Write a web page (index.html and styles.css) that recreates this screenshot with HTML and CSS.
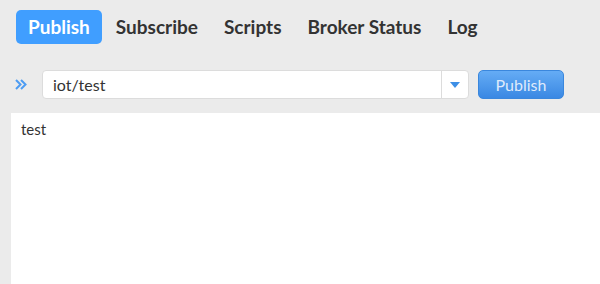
FILE: index.html
```html
<!DOCTYPE html>
<html lang="en">
<head>
<meta charset="UTF-8" />
<title>MQTT Publish</title>
<link rel="stylesheet" href="styles.css">
</head>
<body>
<div class="app">
  <nav class="tabs">
    <a class="tab active">Publish</a>
    <a class="tab">Subscribe</a>
    <a class="tab">Scripts</a>
    <a class="tab">Broker Status</a>
    <a class="tab">Log</a>
  </nav>
  <div class="topic-row">
    <span class="expand">
      <svg width="12" height="11" viewBox="0 0 12 11"><path d="M1 1 L5.5 5.5 L1 10 M6 1 L10.5 5.5 L6 10" fill="none" stroke="#4d9cf3" stroke-width="2"/></svg>
    </span>
    <div class="topic">
      <input type="text" value="iot/test" />
      <span class="caret">
        <svg width="10" height="6" viewBox="0 0 10 6"><path d="M0 0 L10 0 L5 6 Z" fill="#3d8fe6"/></svg>
      </span>
    </div>
    <button class="publish">Publish</button>
  </div>
  <div class="payload">test</div>
</div>
</body>
</html>
```

FILE: styles.css
```css
body {
  margin: 0;
  background: #ebebeb;
  font-family: Lato, "Open Sans", sans-serif;
  color: #333;
  overflow: hidden;
}
.app {
  height: 284px;
  display: flex;
  flex-direction: column;
}
.tabs {
  display: flex;
  align-items: center;
  gap: 2px;
  padding: 10px 0 0 16px;
}
.tab {
  font-size: 19px;
  font-weight: bold;
  color: #333;
  padding: 0 12px;
  height: 34px;
  line-height: 34px;
  border-radius: 5px;
}
.tab.active {
  background: #409eff;
  color: #fff;
}
.topic-row {
  display: flex;
  align-items: center;
  padding: 26px 0 0 15px;
  height: 29px;
}
.expand {
  width: 27px;
  display: flex;
  align-items: center;
}
.topic {
  display: flex;
  width: 427px;
  height: 29px;
  background: #fff;
  border: 1px solid #dcdcdc;
  border-radius: 4px;
  box-sizing: border-box;
}
.topic input {
  flex: 1;
  border: none;
  outline: none;
  font-family: inherit;
  font-size: 16px;
  color: #333;
  padding: 0 10px;
  background: transparent;
}
.caret {
  width: 26px;
  border-left: 1px solid #dcdcdc;
  display: flex;
  align-items: center;
  justify-content: center;
}
.publish {
  margin-left: 9px;
  width: 86px;
  height: 29px;
  border: 1px solid #3a87dd;
  border-radius: 5px;
  background: linear-gradient(#65acf5, #3a88e3);
  color: #dfeafb;
  font-family: inherit;
  font-size: 16px;
}
.payload {
  flex: 1;
  margin: 14px 0 0 11px;
  background: #fff;
  padding: 7px 10px;
  font-size: 15px;
}
```
